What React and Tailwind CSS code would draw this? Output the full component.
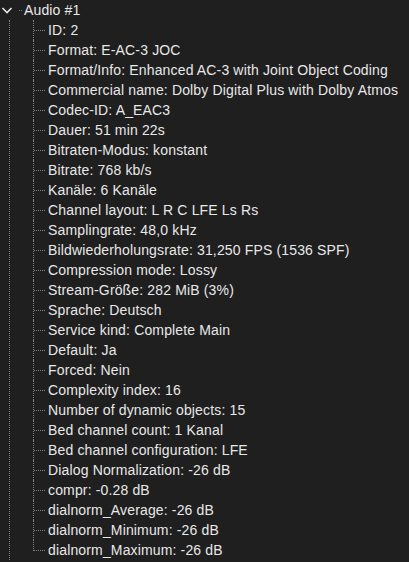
const items = [
  'ID: 2',
  'Format: E-AC-3 JOC',
  'Format/Info: Enhanced AC-3 with Joint Object Coding',
  'Commercial name: Dolby Digital Plus with Dolby Atmos',
  'Codec-ID: A_EAC3',
  'Dauer: 51 min 22s',
  'Bitraten-Modus: konstant',
  'Bitrate: 768 kb/s',
  'Kanäle: 6 Kanäle',
  'Channel layout: L R C LFE Ls Rs',
  'Samplingrate: 48,0 kHz',
  'Bildwiederholungsrate: 31,250 FPS (1536 SPF)',
  'Compression mode: Lossy',
  'Stream-Größe: 282 MiB (3%)',
  'Sprache: Deutsch',
  'Service kind: Complete Main',
  'Default: Ja',
  'Forced: Nein',
  'Complexity index: 16',
  'Number of dynamic objects: 15',
  'Bed channel count: 1 Kanal',
  'Bed channel configuration: LFE',
  'Dialog Normalization: -26 dB',
  'compr: -0.28 dB',
  'dialnorm_Average: -26 dB',
  'dialnorm_Minimum: -26 dB',
  'dialnorm_Maximum: -26 dB',
];

function TreeRow({ label, last }) {
  return (
    <div className="flex h-5">
      <div className="relative w-[15px] shrink-0">
        <div
          className={`absolute left-0 top-0 border-l border-dotted border-[#808080] ${last ? 'h-[11px]' : 'h-full'}`}
        />
        <div className="absolute left-[1px] top-[10px] w-[11px] border-t border-dotted border-[#808080]" />
      </div>
      <span className="leading-5 whitespace-nowrap">{label}</span>
    </div>
  );
}

export default function App() {
  return (
    <div
      className="w-[409px] h-[562px] overflow-hidden bg-[#1f1f1f] text-[#e8e8e8] text-[14px] tracking-[0.15px]"
      style={{ fontFamily: '"Liberation Sans", Arial, sans-serif' }}
    >
      <div className="flex h-5 items-center">
        <svg width="24" height="20" viewBox="0 0 24 20" className="shrink-0">
          <path d="M2.5 8 L7 12.5 L11.5 8" fill="none" stroke="#e8e8e8" strokeWidth="1.6" />
          <rect x="19" y="10" width="1" height="1" fill="#808080" />
          <rect x="21" y="10" width="1" height="1" fill="#808080" />
        </svg>
        <span className="leading-5">Audio #1</span>
      </div>
      <div className="flex">
        <div className="w-[33px] shrink-0 pl-[9px]">
          <div className="h-full border-l border-dotted border-[#808080]" />
        </div>
        <div className="flex flex-col">
          {items.map((label, i) => (
            <TreeRow key={label} label={label} last={i === items.length - 1} />
          ))}
        </div>
      </div>
    </div>
  );
}
